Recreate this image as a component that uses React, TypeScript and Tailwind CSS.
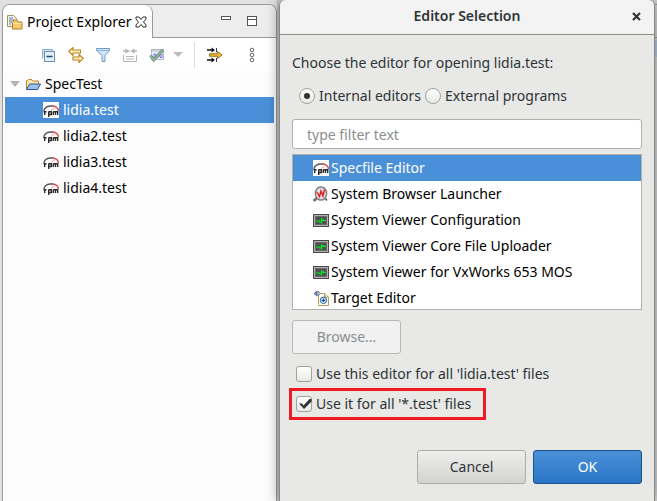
import React, { useState } from 'react';

const files = ['lidia.test', 'lidia2.test', 'lidia3.test', 'lidia4.test'];

const RpmIcon = () => (
  <svg width="16" height="16" viewBox="0 0 16 16" className="shrink-0">
    <rect width="16" height="16" fill="#fdfdfd" />
    <path d="M.8 9C1.500 6 4 4.300 7 4h3.500" fill="none" stroke="#555" strokeWidth="1.300" />
    <path d="M10 4c3 .3 5 2 5.500 5" fill="none" stroke="#e84848" strokeWidth="1.500" />
    <path d="M8 8.500L11.500 6" stroke="#f0a8a8" strokeWidth="1" />
    <path d="M1.700 13V9.500M.5 9.700h3M5.700 15V9.500M5.700 9.800h2.600v2.700H5.700M10.300 13V9.500M10.300 9.800h4.400V13M12.500 9.800V13" fill="none" stroke="#2a2a2a" strokeWidth="1.400" />
  </svg>
);

const BrowserIcon = () => (
  <svg width="16" height="16" viewBox="0 0 16 16" className="shrink-0">
    <path d="M.8 15L4 11.800" stroke="#777" strokeWidth="2.800" />
    <ellipse cx="8" cy="7.500" rx="5.600" ry="6.600" fill="#e4e4e4" stroke="#808080" strokeWidth="1.500" />
    <path d="M12.500 12.500l1.500 2" stroke="#555" strokeWidth="1.500" />
    <path d="M4 6l2.500 4.500L8 5l2 5 1.500-6.500" fill="none" stroke="#dc2222" strokeWidth="1.500" />
  </svg>
);

const ViewerIcon = () => (
  <svg width="16" height="16" viewBox="0 0 16 16" className="shrink-0">
    <rect x="0.500" y="2.500" width="15" height="12" fill="#b0b0b0" stroke="#4a4a4a" />
    <rect x="2.500" y="4.500" width="11" height="8" fill="#505050" stroke="#6a6a6a" />
    <path d="M3 9h4.500M8.500 6v5.500M9 8.500h4M6 10h2M9.500 7.500h1.500" fill="none" stroke="#00f020" />
  </svg>
);

const TargetIcon = () => (
  <svg width="16" height="16" viewBox="0 0 16 16" className="shrink-0">
    <path d="M5.500 14.500V3.500h6l4 3.500v8.500h-10z" fill="#fffdf2" stroke="#b99b57" />
    <path d="M11.500 3.500V7h4" fill="#ecd9a0" stroke="#b99b57" />
    <circle cx="10.500" cy="10.300" r="3.200" fill="#dcefff" stroke="#1f64a8" />
    <path d="M10.500 8.500v3.600M8.700 10.300h3.600" stroke="#174f90" strokeWidth="1.300" />
    <path d="M1 3.500L4 .8v5.400z" fill="#6c91c8" stroke="#3b62a0" strokeWidth=".7" />
    <path d="M5 1l2.500 2.500L5 6z" fill="#efd58b" stroke="#4b62a0" strokeWidth=".7" />
  </svg>
);

const editors = [
  { name: 'Specfile Editor', icon: RpmIcon },
  { name: 'System Browser Launcher', icon: BrowserIcon },
  { name: 'System Viewer Configuration', icon: ViewerIcon },
  { name: 'System Viewer Core File Uploader', icon: ViewerIcon },
  { name: 'System Viewer for VxWorks 653 MOS', icon: ViewerIcon },
  { name: 'Target Editor', icon: TargetIcon },
];

const ExplorerIcon = () => (
  <svg width="16" height="16" viewBox="0 0 16 16" className="shrink-0">
    <path d="M.5 1.500h6l3 3v8h-9z" fill="#f4f2e6" stroke="#a2915f" />
    <path d="M2 4h4M2 6h5M2 8h3M2 10h2" stroke="#5b7fb5" />
    <path d="M5.500 8.500l1.500-2.500h3l1 2h4v7h-9.500z" fill="#f8cd70" stroke="#bc7a1a" />
    <path d="M6 9.500h8.500" stroke="#ffe9ae" />
  </svg>
);

const FolderIcon = () => (
  <svg width="16" height="16" viewBox="0 0 16 16" className="shrink-0">
    <path d="M1.500 13V4.500h1l1-1h3l1 1.500h6V8" fill="#fbe7b0" stroke="#b98632" />
    <path d="M1.500 13.500l3-5.500h11l-3 5.500z" fill="#9cc0ee" stroke="#2c5596" />
  </svg>
);

const CollapseIcon = () => (
  <svg width="16" height="16" viewBox="0 0 16 16">
    <path d="M1.500 11.500v-9h10v2" fill="#cfe2f5" stroke="#91aecb" />
    <rect x="3.500" y="4.500" width="10" height="10" fill="#e3f0fb" stroke="#6f91b5" />
    <path d="M5.500 9.500h6" stroke="#154a80" strokeWidth="1.500" />
  </svg>
);

const LinkIcon = () => (
  <svg width="16" height="16" viewBox="0 0 16 16">
    <path d="M.7 4.500L5 .5v2.500h7.500v3H5v2.500z" fill="#fff0bb" stroke="#bd8119" strokeWidth="1.100" />
    <path d="M15.300 11.500L11 7.500V10H5v3h6v2.500z" fill="#fff0bb" stroke="#bd8119" strokeWidth="1.100" />
  </svg>
);

const FilterIcon = () => (
  <svg width="16" height="16" viewBox="0 0 16 16">
    <path d="M1.500 1.500h13v2L10 8.500v6H7v-6l-5.500-5z" fill="#cfe4f8" stroke="#6f9cc5" />
    <path d="M2 3.500h12" stroke="#8fb2d4" />
  </svg>
);

const TaskIcon = () => (
  <svg width="16" height="16" viewBox="0 0 16 16">
    <path d="M1 4h5M10 4h5M6 4L3.500 2M6 4L3.500 6M10 4l2.500-2M10 4l2.500 2M6 4l1.500 0M10 4L8.500 4" stroke="#b5b5b5" strokeWidth="1.300" />
    <path d="M1.500 8v6.500h13V8M4 9.500h8M4 12h8" fill="none" stroke="#b5b5b5" />
  </svg>
);

const CheckViewIcon = () => (
  <svg width="16" height="16" viewBox="0 0 16 16">
    <rect x="2.500" y="2.500" width="12" height="10" fill="#eef2fb" stroke="#b3b9cc" />
    <path d="M3 4h11" stroke="#ccd2de" strokeWidth="2" />
    <path d="M3 10.500h2V7h2v3.500h2V7h2v3.500h2V7" fill="none" stroke="#6c70e6" />
    <path d="M1.500 8.500l3.200 4.500L14 3" fill="none" stroke="#5f7a66" strokeWidth="3" />
    <path d="M1.500 8.500l3.200 4.500L14 3" fill="none" stroke="#8fbb97" strokeWidth="1.800" />
  </svg>
);

const FocusIcon = () => (
  <svg width="16" height="16" viewBox="0 0 16 16">
    <path d="M0 3h6M0 13h6" stroke="#111" strokeWidth="1.500" />
    <path d="M4.500 .5L8 3 4.500 5.500zM4.500 10.500L8 13 4.500 15.500z" fill="#111" />
    <path d="M9.500 1v4M9.500 11v4" stroke="#335" />
    <path d="M2.500 6.800h8V4.500L15 8l-4.500 3.500V9.200h-8z" fill="#f3c32f" stroke="#8f6820" />
  </svg>
);

const toolButton = 'flex h-4 w-4 shrink-0 items-center justify-center';

const Toolbar = () => (
  <div className="flex h-[33px] shrink-0 items-center bg-white pl-[38px] pr-4">
    <div className="flex gap-[11px]">
      <button aria-label="Collapse All" className={toolButton}><CollapseIcon /></button>
      <button aria-label="Link with Editor" className={toolButton}><LinkIcon /></button>
      <button aria-label="Filters" className={toolButton}><FilterIcon /></button>
      <button aria-label="Synchronize" className={toolButton}><TaskIcon /></button>
      <button aria-label="Checks" className={toolButton}><CheckViewIcon /></button>
    </div>
    <button aria-label="Check options" className="ml-2 flex h-4 w-2.5 items-center justify-center">
      <svg width="10" height="5" viewBox="0 0 10 5"><path d="M0 0h10L5 5z" fill="#bcbcb8" /></svg>
    </button>
    <span className="ml-[11px] h-[26px] w-px bg-[#dcdcdc]" />
    <button aria-label="Focus" className="ml-3"><FocusIcon /></button>
    <button aria-label="View Menu" className="ml-auto flex h-4 w-4 justify-center">
      <svg width="6" height="16" viewBox="0 0 6 16" fill="#fff" stroke="#666">
        <circle cx="3" cy="3" r="1.800" />
        <circle cx="3" cy="8" r="1.800" />
        <circle cx="3" cy="13" r="1.800" />
      </svg>
    </button>
  </div>
);

const ProjectExplorer = () => {
  const [selected, setSelected] = useState('lidia.test');

  return (
    <aside className="flex w-[279px] shrink-0 bg-[#c4c4c4] pr-0.5">
      <div className="flex flex-1 flex-col bg-[#e1e1e1] pt-1">
        <div className="ml-0.5 flex flex-1 flex-col overflow-hidden rounded-t-lg border-x border-t border-[#999] bg-[#fcfcfc]">
          <div className="flex h-[33px] shrink-0 bg-[#ededed]">
            <div className="flex w-[150px] items-center gap-1 rounded-tr-lg border-r border-[#999] bg-white pl-1">
              <ExplorerIcon />
              <span className="whitespace-nowrap text-black">Project Explorer</span>
              <button aria-label="Close view">
                <svg width="12" height="12" viewBox="0 0 12 12">
                  <path d="M1 1h3l2 2.500L8 1h3v2L8.500 6 11 9v2H8L6 8.500 4 11H1V9l2.500-3L1 3z" fill="#fff" stroke="#333" />
                </svg>
              </button>
            </div>
            <div className="flex flex-1 items-start justify-end gap-4 border-b border-[#999] pr-[19px] pt-[11px]">
              <button aria-label="Minimize" className="h-1 w-2.5 border border-[#555] bg-white" />
              <button aria-label="Maximize" className="h-2.5 w-2.5 border border-[#555] bg-white">
                <span className="mb-1 block h-px bg-[#555]" />
              </button>
            </div>
          </div>
          <Toolbar />
          <ul className="px-0.5 text-black">
            <li className="flex h-[26px] items-center pl-[5px]">
              <svg width="10" height="6" viewBox="0 0 10 6"><path d="M0 0h10L5 6z" fill="#b5b5b0" /></svg>
              <span className="ml-[5px] flex items-center gap-1"><FolderIcon />SpecTest</span>
            </li>
            {files.map((file) => (
              <li key={file}>
                <button
                  onClick={() => setSelected(file)}
                  className={`flex h-[26px] w-full items-center gap-1 pl-[38px] ${file === selected ? 'bg-[#4a90d9] text-white' : ''}`}
                >
                  <RpmIcon />
                  {file}
                </button>
              </li>
            ))}
          </ul>
        </div>
      </div>
    </aside>
  );
};

const radioClass = "grid h-4 w-4 appearance-none place-items-center rounded-full border border-[#a0a09c] bg-linear-to-b from-white to-[#e8e8e6] checked:before:h-1.5 checked:before:w-1.5 checked:before:rounded-full checked:before:bg-[#2e3436] checked:before:content-['']";

const CheckOption: React.FC<{ label: string; checked: boolean; onChange: (v: boolean) => void }> = ({ label, checked, onChange }) => (
  <label className="flex items-center gap-1">
    <span className="relative h-4 w-4">
      <input
        type="checkbox"
        checked={checked}
        onChange={(e) => onChange(e.target.checked)}
        className="block h-4 w-4 appearance-none rounded-[3px] border border-[#a0a09c] bg-linear-to-b from-white to-[#e8e8e6]"
      />
      {checked && (
        <svg className="pointer-events-none absolute inset-0" width="16" height="16" viewBox="0 0 16 16">
          <path d="M3 7.500h3l1.500 2L13.500 3h2v2.500L8 13z" fill="#2e3436" />
        </svg>
      )}
    </span>
    {label}
  </label>
);

const EditorDialog = () => {
  const [source, setSource] = useState('internal');
  const [editor, setEditor] = useState('Specfile Editor');
  const [useForName, setUseForName] = useState(false);
  const [useForType, setUseForType] = useState(true);

  return (
    <section className="z-10 flex min-w-0 flex-1 flex-col rounded-t-md border-x border-[#888] bg-[#e8e8e6] text-[#2e3436] shadow-[0_0_14px_rgba(0,0,0,0.4)]">
      <header className="grid h-[35px] shrink-0 grid-cols-[32px_1fr_32px] items-center rounded-t-md border-b border-[#8e8e80] bg-[#f3f3f3] pb-0.5">
        <h1 className="col-start-2 text-center font-semibold">Editor Selection</h1>
        <button aria-label="Close" className="-ml-1 flex justify-center">
          <svg width="9" height="9" viewBox="0 0 9 9"><path d="M1 1l7 7M8 1L1 8" stroke="#2e3436" strokeWidth="2.200" /></svg>
        </button>
      </header>

      <div className="flex flex-col px-3 pt-[18px]">
        <p>Choose the editor for opening lidia.test:</p>
        <div className="mt-[13px] flex gap-1 pl-[7px]">
          <label className="flex items-center gap-1">
            <input type="radio" name="source" className={radioClass} checked={source === 'internal'} onChange={() => setSource('internal')} />
            Internal editors
          </label>
          <label className="flex items-center gap-1">
            <input type="radio" name="source" className={radioClass} checked={source === 'external'} onChange={() => setSource('external')} />
            External programs
          </label>
        </div>
        <input
          aria-label="Filter"
          placeholder="type filter text"
          className="mt-[13px] h-[30px] w-full rounded-[3px] border border-[#b0b0ac] bg-white px-3.5 placeholder:text-[#8b8e8f]"
        />
        <ul className="mt-[5px] h-[156px] overflow-hidden border border-[#b0b0ac] bg-white text-black">
          {editors.map((item) => {
            const Icon = item.icon;
            return (
              <li key={item.name}>
                <button
                  onClick={() => setEditor(item.name)}
                  className={`flex h-[26px] w-full items-center gap-0.5 whitespace-nowrap pl-5 ${item.name === editor ? 'bg-[#4a90d9] text-white' : ''}`}
                >
                  <Icon />
                  {item.name}
                </button>
              </li>
            );
          })}
        </ul>
        <button disabled className="mt-2.5 h-[34px] w-[109px] rounded-[3px] border border-[#b8b8b4] bg-[#f1f1f1] text-[#8b8e8f]">Browse...</button>
        <div className="mt-2.5 pl-1">
          <CheckOption label="Use this editor for all 'lidia.test' files" checked={useForName} onChange={setUseForName} />
        </div>
        <div className="-ml-[3px] mt-1 flex h-8 w-[197px] items-center border-3 border-[#ed1c24] pl-1">
          <CheckOption label="Use it for all '*.test' files" checked={useForType} onChange={setUseForType} />
        </div>
        <div className="mt-[30px] flex justify-end gap-[7px]">
          <button className="h-[34px] w-[109px] rounded-[3px] border border-[#acaca8] bg-linear-to-b from-[#eeeeed] to-[#d2d2d0]">Cancel</button>
          <button className="h-[34px] w-[109px] rounded-[3px] border border-[#1c5187] bg-linear-to-b from-[#4a90d9] to-[#2a76c6] text-white">OK</button>
        </div>
      </div>
    </section>
  );
};

const App: React.FC = () => (
  <main className="flex min-h-screen bg-[#d0d0d0] font-['Noto_Sans',sans-serif] text-[14px] leading-5">
    <ProjectExplorer />
    <EditorDialog />
    {/* Edge of the window behind the dialog */}
    <div className="flex w-0.5 shrink-0 flex-col bg-[#d4d4d4] pt-1">
      <div className="h-[34px] border-y border-[#999]" />
      <div className="mt-0.5 h-[17px] bg-[#b4c8e0]" />
    </div>
  </main>
);

export default App;
